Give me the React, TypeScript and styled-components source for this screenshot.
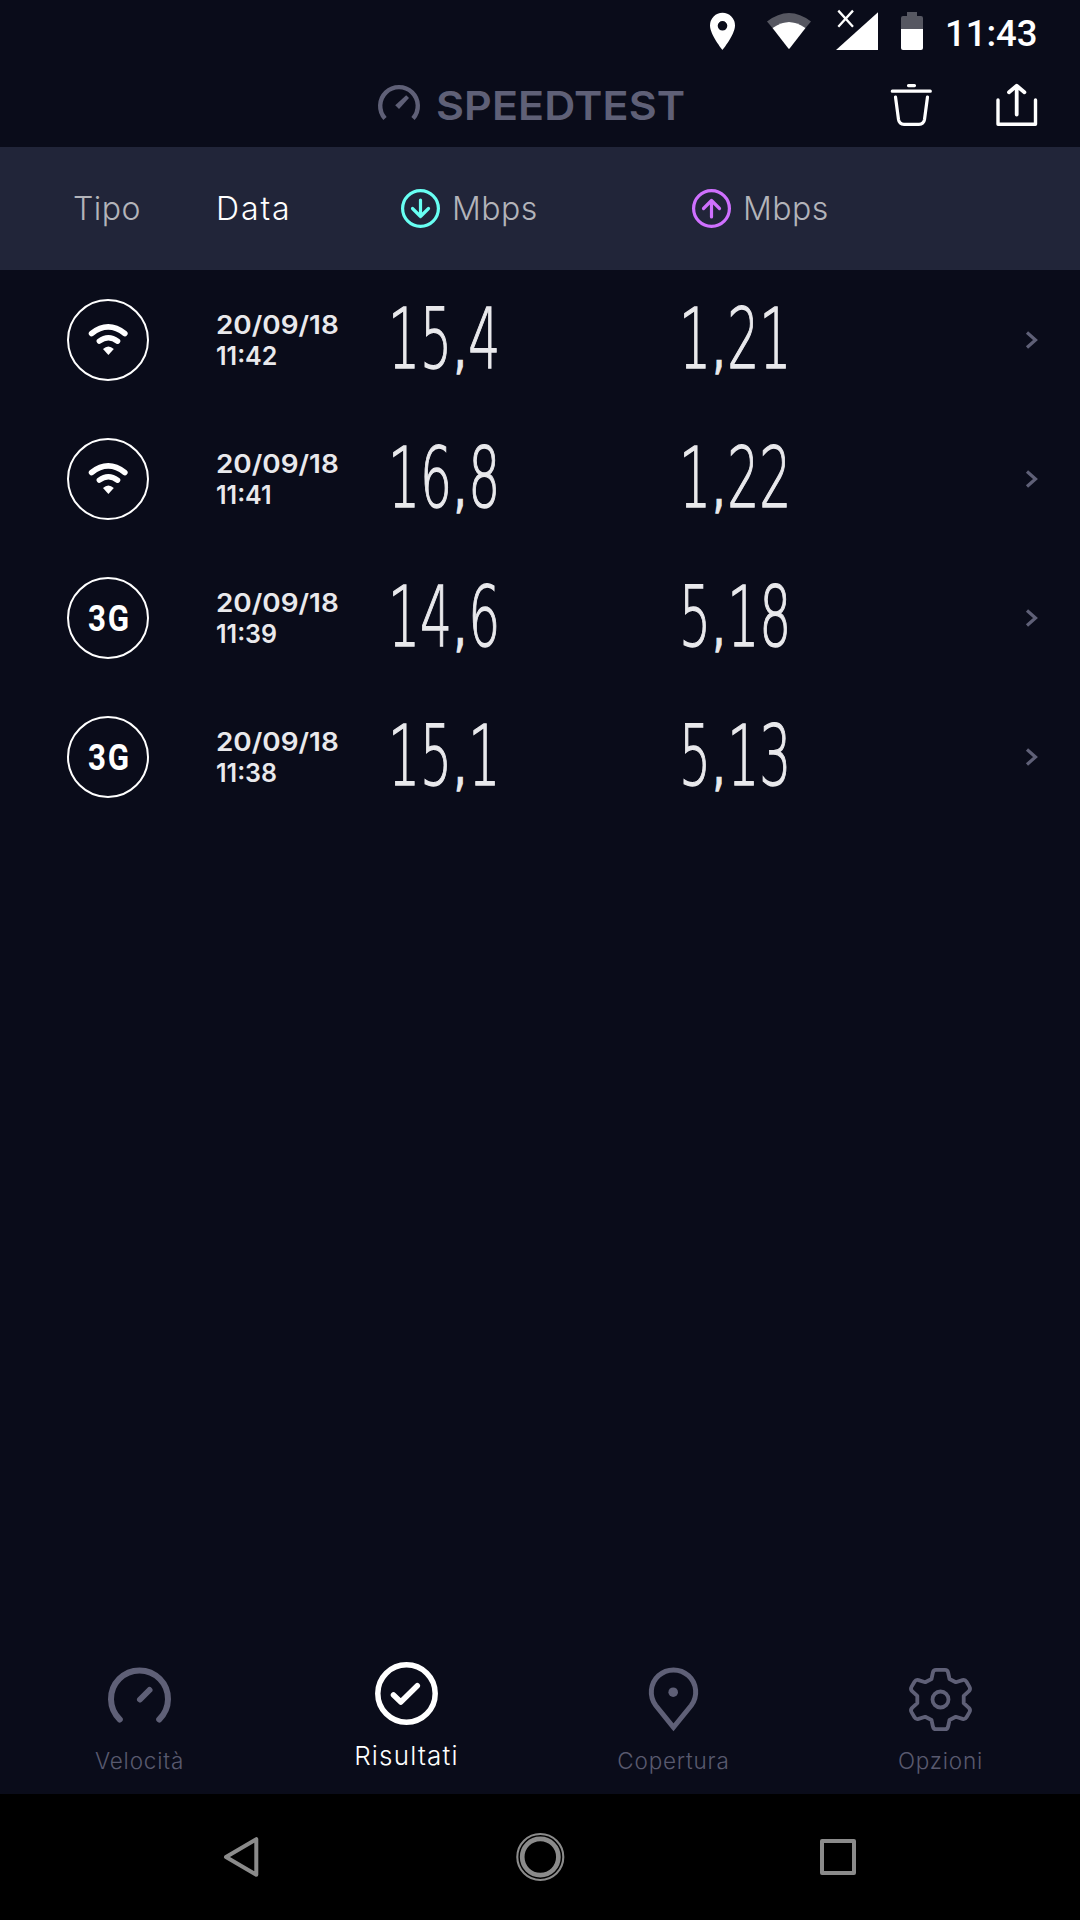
import React from 'react';
import styled, { createGlobalStyle } from 'styled-components';

const Global = createGlobalStyle`
  body { margin: 0; background: #0a0c1a; }
`;

const Screen = styled.div`
  width: 1080px;
  height: 1920px;
  display: flex;
  flex-direction: column;
  overflow: hidden;
  background: #0a0c1a;
  color: #fff;
  font-family: Inter, 'Liberation Sans', sans-serif;
  svg { display: block; flex: none; overflow: visible; }
`;

const StatusBar = styled.div`
  height: 64px;
  box-sizing: border-box;
  padding: 10px 43px 0 0;
  display: flex;
  justify-content: flex-end;
  align-items: flex-start;
`;

const StatusIcon = styled.svg<{ $gap: number }>`
  margin-right: ${p => p.$gap}px;
`;

const Clock = styled.div`
  font: 500 36.5px/48px Roboto, sans-serif;
  width: 92px;
  text-align: right;
  white-space: nowrap;
`;

const TitleBar = styled.header`
  height: 83px;
  box-sizing: border-box;
  padding: 20px 42px 0 378px;
  display: flex;
  align-items: flex-start;
  color: #5f6077;
`;

const Brand = styled.h1`
  margin: 0 0 0 16px;
  width: 455px;
  font-size: 40px;
  font-weight: 600;
  line-height: 43px;
  letter-spacing: 0.1px;
  white-space: nowrap;
  transform: scaleX(1.075);
  transform-origin: 0 50%;
`;

const Actions = styled.div`
  display: flex;
  gap: 62px;
  color: #fff;
`;

const columns = '216px 175px 291px 344px 1fr';

const TableHead = styled.div`
  height: 123px;
  display: grid;
  grid-template-columns: ${columns};
  align-items: center;
  background: #212539;
  color: #b3b4ba;
  font-size: 32px;
  font-weight: 350;
`;

const HeadCell = styled.div<{ $left?: number; $active?: boolean }>`
  display: flex;
  align-items: center;
  gap: 12px;
  padding-left: ${p => p.$left ?? 0}px;
  letter-spacing: ${p => (p.$active ? 1.9 : 0.5)}px;
  color: ${p => (p.$active ? '#fff' : 'inherit')};
`;

const Row = styled.div`
  height: 139px;
  display: grid;
  grid-template-columns: ${columns};
  align-items: center;
  color: #e9e9ec;
`;

const TypeBadge = styled.div`
  width: 82px;
  height: 82px;
  box-sizing: border-box;
  margin-left: 67px;
  border: 2px solid #fff;
  border-radius: 50%;
  display: flex;
  align-items: center;
  justify-content: center;
  color: #fff;
`;

const TypeLabel = styled.span`
  font: 700 36px/36px Roboto, sans-serif;
  letter-spacing: 2px;
  padding: 2px 0 0 4px;
  transform: scaleX(0.87);
`;

const Stamp = styled.div`
  display: flex;
  flex-direction: column;
  padding-top: 2px;
  font-size: 25px;
  font-weight: 600;
  line-height: 31px;
  white-space: nowrap;
`;

const StampDate = styled.span`
  transform: scaleX(1.115);
  transform-origin: 0 50%;
`;

const Speed = styled.div`
  font-family: 'DejaVu Sans', sans-serif;
  font-weight: 200;
  font-size: 84px;
  line-height: 84px;
  height: 84px;
  margin: 0 0 2px -3px;
  white-space: nowrap;
  -webkit-text-stroke: 1.3px currentColor;
  transform: scaleX(0.6);
  transform-origin: 0 50%;
`;

const Comma = styled.span`
  display: inline-block;
  width: 27px;
  text-align: center;
  font-size: 40px;
  line-height: 40px;
  font-weight: 700;
`;

const Spacer = styled.div`
  flex: 1;
`;

const Tabs = styled.nav`
  height: 144px;
  padding: 0 6px;
  display: grid;
  grid-template-columns: repeat(4, 1fr);
`;

const Tab = styled.div<{ $active?: boolean }>`
  display: flex;
  flex-direction: column;
  align-items: center;
  padding-top: ${p => (p.$active ? 12 : 18)}px;
  color: ${p => (p.$active ? '#fff' : '#5f6077')};
`;

const TabLabel = styled.span<{ $active?: boolean }>`
  margin-top: ${p => (p.$active ? 15 : 14)}px;
  font-size: ${p => (p.$active ? 26 : 22.5)}px;
  line-height: 32px;
  font-weight: 350;
  letter-spacing: ${p => (p.$active ? 1.2 : 0.8)}px;
  color: ${p => (p.$active ? '#fff' : '#595a6f')};
`;

const NavBar = styled.div`
  height: 126px;
  background: #000;
  display: flex;
  align-items: center;
  justify-content: space-between;
  padding: 0 224px 0 223px;
`;

const Arrow = ({ up, color }: { up?: boolean; color: string }) => (
  <svg width="39" height="39" viewBox="0 0 39 39" fill="none" stroke={color} strokeWidth="3.2">
    <circle cx="19.5" cy="19.5" r="17.900" />
    <path strokeLinecap="round" strokeLinejoin="round" d={up ? 'M19.5 28V11.5M11.5 19.5l8-8 8 8' : 'M19.5 11v16.5M11.5 19.5l8 8 8-8'} />
  </svg>
);

const WifiGlyph = () => (
  <svg width="40" height="32" viewBox="0 0 40 32" fill="none" stroke="#fff" strokeLinecap="round">
    <path d="M3.600 9.400Q20.200 -3.600 36.800 9.400" strokeWidth="5.700" />
    <path d="M11.300 17.200Q20.300 10.400 29.600 17.200" strokeWidth="5.400" />
    <path d="M15 25Q20.300 19.800 25.800 25L20.400 31Z" fill="#fff" stroke="none" />
  </svg>
);

const SpeedValue = ({ value }: { value: string }) => {
  const [whole, decimals] = value.split(',');
  return (
    <Speed>{whole}<Comma>,</Comma>{decimals}</Speed>
  );
};

const results = [
  { type: 'wifi', date: '20/09/18', time: '11:42', down: '15,4', up: '1,21' },
  { type: 'wifi', date: '20/09/18', time: '11:41', down: '16,8', up: '1,22' },
  { type: '3G', date: '20/09/18', time: '11:39', down: '14,6', up: '5,18' },
  { type: '3G', date: '20/09/18', time: '11:38', down: '15,1', up: '5,13' },
];

const Gear = () => (
  <svg width="63" height="63" viewBox="-31.5 -31.5 63 63" fill="none" stroke="currentColor" strokeWidth="3.8" strokeLinejoin="round">
    <circle r="8" strokeWidth="3.8" />
    <path d="M-4.5 -29.7H4.5Q7 -29.7 7.6 -27L9 -20.5L15.3 -17.3L22 -19.4Q24.6 -20.1 26 -17.8L29 -12.6Q30.3 -10.4 28.4 -8.4L23.2 -3.7V3.7L28.4 8.4Q30.3 10.4 29 12.6L26 17.8Q24.6 20.1 22 19.4L15.3 17.3L9 20.5L7.6 27Q7 29.7 4.5 29.7H-4.5Q-7 29.7 -7.6 27L-9 20.5L-15.3 17.3L-22 19.4Q-24.6 20.1 -26 17.8L-29 12.6Q-30.3 10.4 -28.4 8.4L-23.2 3.7V-3.7L-28.4 -8.4Q-30.3 -10.4 -29 -12.6L-26 -17.8Q-24.6 -20.1 -22 -19.4L-15.3 -17.3L-9 -20.5L-7.6 -27Q-7 -29.7 -4.5 -29.7Z" />
  </svg>
);

export default function App() {
  return (
    <Screen>
      <Global />
      <StatusBar>
        <StatusIcon $gap={32} width="25" height="40" viewBox="0 0 25 40" fill="#fff" fillRule="evenodd">
          <path d="M12.5 2.7A12.5 12.8 0 0 0 0 15.5C0 24.5 12.5 40 12.5 40S25 24.5 25 15.5A12.5 12.8 0 0 0 12.5 2.7ZM12.5 11a4.8 4.8 0 1 1 0 9.6a4.8 4.8 0 0 1 0-9.6Z" />
        </StatusIcon>
        <StatusIcon $gap={25} width="44" height="40" viewBox="0 0 44 40" fill="#fff">
          <path fill="#565761" d="M0 11.5Q22 -5.5 44 11.5L38.5 18Q22 6 5.5 18Z" />
          <path d="M5.5 18Q22 6 38.5 18L22.8 38.2Q22 39.2 21.2 38.2Z" />
        </StatusIcon>
        <StatusIcon $gap={23} width="42" height="40" viewBox="0 0 42 40" fill="#fff">
          <path d="M42 2.3V40H0Z" />
          <path d="M2.300 .6L17 16.7M17 .6L2.300 16.7" stroke="#fff" strokeWidth="2.300" />
        </StatusIcon>
        <StatusIcon $gap={22} width="22" height="40" viewBox="0 0 22 40">
          <path fill="#565761" d="M6 2h10v4h4a2 2 0 0 1 2 2v11H0V8a2 2 0 0 1 2-2h4Z" />
          <path fill="#fff" d="M0 19h22v19a2 2 0 0 1-2 2H2a2 2 0 0 1-2-2Z" />
        </StatusIcon>
        <Clock>11:43</Clock>
      </StatusBar>

      <TitleBar>
        <svg width="42" height="42" viewBox="0 0 42 42" fill="none" stroke="currentColor" strokeWidth="4.4">
          <path d="M7 34.5A18.8 18.8 0 1 1 35 34.5" />
          <path d="M28.2 11.2L31 14L21 25L17.2 21.3Z" fill="currentColor" stroke="none" />
        </svg>
        <Brand>SPEEDTEST</Brand>
        <Actions>
          <svg width="43" height="42" viewBox="0 0 43 42" fill="none" stroke="currentColor" strokeWidth="3.2" strokeLinecap="round">
            <path d="M17.500 1.6h6M1.300 7.2h38M4.500 13l3 22.5Q8.300 40.300 13 40.300H28Q32.700 40.300 33.500 35.500L36.500 13" />
          </svg>
          <svg width="42" height="42" viewBox="0 0 42 42" fill="none" stroke="currentColor" strokeLinecap="round" strokeLinejoin="round">
            <path d="M2 16v24.300h37.500V16" strokeWidth="3.4" />
            <path d="M20.700 30.500V2M13 8.200L20.700 1.800L28.400 8.200" strokeWidth="3.800" />
          </svg>
        </Actions>
      </TitleBar>

      <TableHead>
        <HeadCell $left={73}>Tipo</HeadCell>
        <HeadCell $active>Data</HeadCell>
        <HeadCell $left={10}><Arrow color="#68fff3" />Mbps</HeadCell>
        <HeadCell $left={10}><Arrow up color="#cf70ff" />Mbps</HeadCell>
      </TableHead>

      {results.map(r => (
        <Row key={r.time}>
          <TypeBadge>{r.type === 'wifi' ? <WifiGlyph /> : <TypeLabel>{r.type}</TypeLabel>}</TypeBadge>
          <Stamp>
            <StampDate>{r.date}</StampDate>
            <span>{r.time}</span>
          </Stamp>
          <SpeedValue value={r.down} />
          <SpeedValue value={r.up} />
          <svg width="12" height="18" viewBox="0 0 12 18" fill="none" stroke="#5f6077" strokeWidth="3.2">
            <path d="M1 1.500L9.500 9L1 16.500" />
          </svg>
        </Row>
      ))}

      <Spacer />

      <Tabs>
        <Tab>
          <svg width="63" height="63" viewBox="0 0 63 63" fill="none" stroke="currentColor" strokeWidth="6" strokeLinecap="round">
            <path d="M11.800 51.500A28.500 28.500 0 1 1 51.200 51.500M32 31.500L41.500 22" />
          </svg>
          <TabLabel>Velocità</TabLabel>
        </Tab>
        <Tab $active>
          <svg width="63" height="63" viewBox="0 0 63 63" fill="none" stroke="currentColor" strokeWidth="5.500" strokeLinecap="round" strokeLinejoin="round">
            <circle cx="31.500" cy="31.500" r="28.700" />
            <path d="M18.500 33L25.800 40L42.300 23.700" />
          </svg>
          <TabLabel $active>Risultati</TabLabel>
        </Tab>
        <Tab>
          <svg width="63" height="63" viewBox="0 0 63 63" fill="none" stroke="currentColor" strokeWidth="5">
            <path d="M31.500 59.300L13.800 37.500A22.200 22.200 0 1 1 49.200 37.500Z" />
            <circle cx="31.200" cy="24.200" r="4.800" fill="currentColor" stroke="none" />
          </svg>
          <TabLabel>Copertura</TabLabel>
        </Tab>
        <Tab>
          <Gear />
          <TabLabel>Opzioni</TabLabel>
        </Tab>
      </Tabs>

      <NavBar>
        <svg width="36" height="42" viewBox="0 0 36 42" fill="none" stroke="#8b8b8b" strokeWidth="4" strokeLinejoin="round">
          <path d="M33.300 3.200V38.800L3 21Z" />
        </svg>
        <svg width="48" height="48" viewBox="0 0 48 48" fill="none" stroke="#8b8b8b">
          <circle cx="24.300" cy="24" r="23" strokeWidth="2.100" />
          <circle cx="24.300" cy="24" r="18.100" strokeWidth="4.700" />
        </svg>
        <svg width="36" height="36" viewBox="0 0 36 36" fill="none" stroke="#8b8b8b" strokeWidth="4" strokeLinejoin="round">
          <path d="M2 2H34V34H2Z" />
        </svg>
      </NavBar>
    </Screen>
  );
}
